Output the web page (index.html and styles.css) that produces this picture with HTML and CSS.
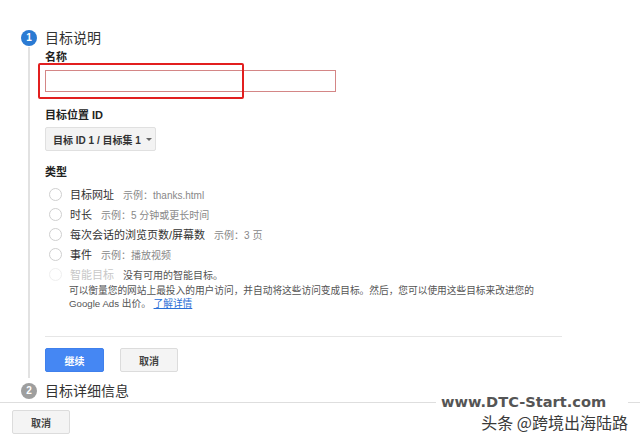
FILE: index.html
```html
<!DOCTYPE html>
<html lang="zh-CN">
<head>
  <meta charset="UTF-8">
  <meta name="viewport" content="width=device-width, initial-scale=1.0">
  <title>目标设置</title>
  <link rel="stylesheet" href="styles.css">
</head>
<body>
  <div class="page">
    <div class="stepper">
      <div class="step">
        <div class="step-rail">
          <span class="step-num active">1</span>
          <span class="step-line"></span>
        </div>
        <div class="step-body">
          <h2 class="step-title">目标说明</h2>
          <div class="field">
            <label class="field-label" for="goalName">名称</label>
            <input class="text-input" type="text" id="goalName">
          </div>
          <div class="field">
            <div class="field-label">目标位置 ID</div>
            <button class="dropdown" type="button">目标 ID 1 / 目标集 1 <span class="caret"></span></button>
          </div>
          <div class="field">
            <div class="field-label">类型</div>
            <ul class="radio-list">
              <li class="radio-row"><span class="radio"></span><span class="radio-name">目标网址</span><span class="radio-hint">示例：thanks.html</span></li>
              <li class="radio-row"><span class="radio"></span><span class="radio-name">时长</span><span class="radio-hint">示例：5 分钟或更长时间</span></li>
              <li class="radio-row"><span class="radio"></span><span class="radio-name">每次会话的浏览页数/屏幕数</span><span class="radio-hint">示例：3 页</span></li>
              <li class="radio-row"><span class="radio"></span><span class="radio-name">事件</span><span class="radio-hint">示例：播放视频</span></li>
              <li class="radio-row disabled"><span class="radio"></span><span class="radio-name">智能目标</span><span class="radio-note">没有可用的智能目标。</span></li>
            </ul>
            <p class="smart-desc">可以衡量您的网站上最投入的用户访问，并自动将这些访问变成目标。然后，您可以使用这些目标来改进您的<br>Google Ads 出价。 <a href="#">了解详情</a></p>
          </div>
          <div class="divider"></div>
          <div class="actions">
            <button class="btn btn-primary" type="button">继续</button>
            <button class="btn" type="button">取消</button>
          </div>
        </div>
      </div>
      <div class="step">
        <div class="step-rail">
          <span class="step-num">2</span>
        </div>
        <div class="step-body">
          <h2 class="step-title">目标详细信息</h2>
        </div>
      </div>
    </div>
    <div class="footer">
      <button class="btn" type="button">取消</button>
    </div>
    <div class="highlight"></div>
    <div class="watermark">
      <div class="wm-site">www.DTC-Start.com</div>
      <div class="wm-author">头条 @跨境出海陆路</div>
    </div>
  </div>
</body>
</html>
```

FILE: styles.css
```css
body {
  margin: 0;
  font-family: "Liberation Sans", Arial, "Noto Sans CJK SC", sans-serif;
  color: #333;
  background: #fff;
}
.page {
  position: relative;
  width: 640px;
  height: 444px;
  overflow: hidden;
}
.stepper {
  padding: 30px 0 0 21px;
}
.step {
  display: grid;
  grid-template-columns: 16px 1fr;
  column-gap: 8px;
}
.step + .step {
  margin-top: 5px;
}
.step-rail {
  display: flex;
  flex-direction: column;
  align-items: center;
}
.step-num {
  width: 16px;
  height: 16px;
  border-radius: 50%;
  background: #9e9e9e;
  color: #fff;
  font-size: 10px;
  font-weight: bold;
  line-height: 16px;
  text-align: center;
}
.step-num.active {
  background: #2a7ad3;
}
.step-line {
  flex: 1;
  width: 2px;
  margin-top: 1px;
  background: #e2e2e2;
}
.step-body {
  padding-bottom: 6px;
}
.step:last-child .step-body {
  padding-bottom: 0;
}
.step-title {
  margin: 0;
  font-size: 14px;
  font-weight: normal;
  line-height: 16px;
  color: #333;
}
.field-label {
  display: block;
  font-size: 11px;
  font-weight: bold;
  line-height: 14px;
  color: #222;
}
.field:nth-of-type(1) {
  margin-top: 4px;
}
.field:nth-of-type(1) .field-label {
  margin-bottom: 6px;
}
.field:nth-of-type(2) {
  margin-top: 16px;
}
.field:nth-of-type(2) .field-label {
  margin-bottom: 5px;
}
.field:nth-of-type(3) {
  margin-top: 14px;
}
.field:nth-of-type(3) .field-label {
  margin-bottom: 5px;
}
.text-input {
  display: block;
  width: 291px;
  height: 22px;
  box-sizing: border-box;
  border: 1px solid #d48686;
  margin: 0;
  padding: 0 6px;
  background: #fff;
}
.dropdown {
  display: flex;
  align-items: center;
  gap: 5px;
  width: 111px;
  height: 24px;
  padding: 0 7px;
  box-sizing: border-box;
  border: 1px solid #e0e0e0;
  border-radius: 2px;
  background: #f3f3f3;
  font-family: inherit;
  font-size: 10px;
  font-weight: bold;
  color: #333;
  white-space: nowrap;
}
.caret {
  width: 0;
  height: 0;
  border-left: 3px solid transparent;
  border-right: 3px solid transparent;
  border-top: 3px solid #666;
}
.radio-list {
  list-style: none;
  margin: 0;
  padding: 0;
}
.radio-row {
  display: flex;
  align-items: center;
  height: 20px;
  padding-left: 4px;
  white-space: nowrap;
}
.radio {
  width: 11px;
  height: 11px;
  border: 1px solid #cfcfcf;
  border-radius: 50%;
  margin-right: 8px;
  flex: none;
}
.radio-name {
  font-size: 11px;
  color: #333;
  margin-right: 9px;
}
.radio-hint {
  font-size: 10px;
  color: #888;
}
.radio-note {
  font-size: 10px;
  color: #555;
}
.disabled .radio {
  border-color: #efefef;
}
.disabled .radio-name {
  color: #c8c8c8;
}
.smart-desc {
  margin: 0 0 0 24px;
  font-size: 9.7px;
  line-height: 13px;
  color: #555;
}
.smart-desc a {
  color: #2a6fd6;
  text-decoration: underline;
}
.divider {
  width: 517px;
  height: 1px;
  margin-top: 26px;
  background: #e6e6e6;
}
.actions {
  display: flex;
  gap: 16px;
  margin-top: 11px;
}
.btn {
  width: 58px;
  height: 24px;
  border: 1px solid #dcdcdc;
  border-radius: 2px;
  background: #f4f4f4;
  font-family: inherit;
  font-size: 10px;
  font-weight: bold;
  color: #444;
  padding: 0;
  white-space: nowrap;
}
.btn-primary {
  width: 59px;
  border-color: #3f80ec;
  background: #4587f3;
  color: #fff;
}
.footer {
  margin-top: 3px;
  border-top: 1px solid #dedede;
  padding: 7px 0 0 12px;
}
.highlight {
  position: absolute;
  left: 38px;
  top: 63px;
  width: 202px;
  height: 32px;
  border: 2px solid #e21f1f;
  border-radius: 2px;
}
.watermark {
  position: absolute;
  left: 436px;
  top: 392px;
  width: 204px;
  padding-right: 12px;
  box-sizing: border-box;
}
.wm-site {
  background: #fff;
  padding-left: 5px;
  font-family: "DejaVu Sans", sans-serif;
  font-size: 14.6px;
  font-weight: bold;
  line-height: 20px;
  color: #555;
  white-space: nowrap;
}
.wm-author {
  font-family: "Noto Sans CJK SC", sans-serif;
  font-size: 16px;
  line-height: 20px;
  color: #3a3a3a;
  text-align: right;
  white-space: nowrap;
}
```
